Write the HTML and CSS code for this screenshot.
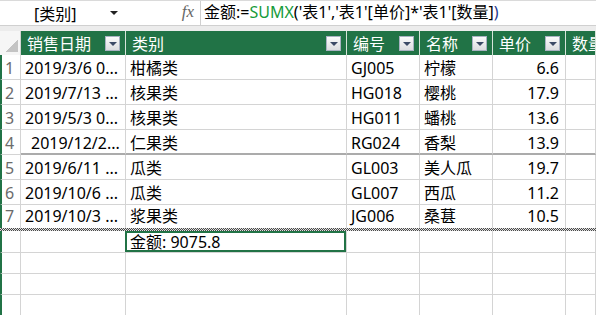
FILE: index.html
```html
<!DOCTYPE html>
<html lang="zh-CN">
<head>
    <meta charset="UTF-8">
    <title>表1</title>
    <link rel="stylesheet" href="styles.css">
</head>
<body>
    <div class="formula-bar">
        <div class="name-box">
            <span class="name">[类别]</span>
            <span class="caret"></span>
        </div>
        <div class="fx">fx</div>
        <div class="formula">金额:=<span class="fn">SUMX</span>('表1','表1'[单价]*'表1'[数量]<span class="paren">)</span></div>
    </div>
    <div class="gap"></div>

    <div class="sheet">
        <div class="row head">
            <div class="corner"></div>
            <div class="hcell"><span>销售日期</span><span class="filter"></span></div>
            <div class="hcell"><span>类别</span><span class="filter"></span></div>
            <div class="hcell"><span>编号</span><span class="filter"></span></div>
            <div class="hcell"><span>名称</span><span class="filter"></span></div>
            <div class="hcell"><span>单价</span><span class="filter"></span></div>
            <div class="hcell"><span>数量</span></div>
        </div>

        <div class="row">
            <div class="rn">1</div>
            <div class="c">2019/3/6 0...</div>
            <div class="c">柑橘类</div>
            <div class="c">GJ005</div>
            <div class="c">柠檬</div>
            <div class="c num">6.6</div>
            <div class="c"></div>
        </div>
        <div class="row">
            <div class="rn">2</div>
            <div class="c">2019/7/13 ...</div>
            <div class="c">核果类</div>
            <div class="c">HG018</div>
            <div class="c">樱桃</div>
            <div class="c num">17.9</div>
            <div class="c"></div>
        </div>
        <div class="row">
            <div class="rn">3</div>
            <div class="c">2019/5/3 0...</div>
            <div class="c">核果类</div>
            <div class="c">HG011</div>
            <div class="c">蟠桃</div>
            <div class="c num">13.6</div>
            <div class="c"></div>
        </div>
        <div class="row split">
            <div class="rn">4</div>
            <div class="c indent">2019/12/2...</div>
            <div class="c">仁果类</div>
            <div class="c">RG024</div>
            <div class="c">香梨</div>
            <div class="c num">13.9</div>
            <div class="c"></div>
        </div>
        <div class="row">
            <div class="rn">5</div>
            <div class="c">2019/6/11 ...</div>
            <div class="c">瓜类</div>
            <div class="c">GL003</div>
            <div class="c">美人瓜</div>
            <div class="c num">19.7</div>
            <div class="c"></div>
        </div>
        <div class="row">
            <div class="rn">6</div>
            <div class="c">2019/10/6 ...</div>
            <div class="c">瓜类</div>
            <div class="c">GL007</div>
            <div class="c">西瓜</div>
            <div class="c num">11.2</div>
            <div class="c"></div>
        </div>
        <div class="row last">
            <div class="rn">7</div>
            <div class="c">2019/10/3 ...</div>
            <div class="c">浆果类</div>
            <div class="c">JG006</div>
            <div class="c">桑葚</div>
            <div class="c num">10.5</div>
            <div class="c"></div>
        </div>
        <div class="table-end"></div>

        <div class="row total">
            <div class="rn"></div>
            <div class="c"></div>
            <div class="c selected">金额: 9075.8</div>
            <div class="c"></div>
            <div class="c"></div>
            <div class="c"></div>
            <div class="c"></div>
        </div>
        <div class="row empty">
            <div class="rn"></div>
            <div class="c"></div>
            <div class="c"></div>
            <div class="c"></div>
            <div class="c"></div>
            <div class="c"></div>
            <div class="c"></div>
        </div>
        <div class="row empty">
            <div class="rn"></div>
            <div class="c"></div>
            <div class="c"></div>
            <div class="c"></div>
            <div class="c"></div>
            <div class="c"></div>
            <div class="c"></div>
        </div>
        <div class="row empty">
            <div class="rn"></div>
            <div class="c"></div>
            <div class="c"></div>
            <div class="c"></div>
            <div class="c"></div>
            <div class="c"></div>
            <div class="c"></div>
        </div>
    </div>
</body>
</html>
```

FILE: styles.css
```css
body {
    margin: 0;
    overflow: hidden;
    background-color: #fff;
    color: #000;
    font-family: "Noto Sans", "Noto Sans CJK SC", sans-serif;
    font-size: 16px;
}

/* formula bar */
.formula-bar {
    display: flex;
    height: 26px;
    border-top: 1px solid #dadada;
    border-bottom: 1px solid #d0d0d0;
    box-sizing: border-box;
}

.name-box {
    width: 128px;
    display: flex;
    align-items: center;
    padding-left: 34px;
    box-sizing: border-box;
}

.name-box .name {
    flex: 1;
}

.caret {
    width: 0;
    height: 0;
    margin-right: 10px;
    border-left: 4px solid transparent;
    border-right: 4px solid transparent;
    border-top: 4px solid #222;
}

.fx {
    width: 73px;
    text-align: right;
    padding-right: 6px;
    box-sizing: border-box;
    font-family: "Liberation Serif", serif;
    font-style: italic;
    font-size: 17px;
    color: #666;
    line-height: 22px;
    border-right: 1px solid #d0d0d0;
}

.formula {
    padding-left: 3px;
    line-height: 23px;
    white-space: nowrap;
}

.formula .fn {
    color: #179b3b;
}

.formula .paren {
    color: #1f3a8f;
}

.gap {
    height: 5px;
    background-color: #ececec;
}

/* sheet grid */
.row {
    display: grid;
    grid-template-columns: 21px 105px 221px 73px 73px 73px 1fr;
    height: 25px;
}

.row > div {
    box-sizing: border-box;
    border-right: 1px solid #d4d4d4;
    border-bottom: 1px solid #d4d4d4;
    white-space: nowrap;
    overflow: hidden;
}

.head {
    height: 24px;
}

.head > div {
    border-bottom: none;
}

.corner {
    background: linear-gradient(135deg, transparent 50%, #c4c4c4 50%) right 2px bottom 3px / 12px 12px no-repeat, #f6f6f6;
}

.hcell {
    background-color: #217346;
    color: #fff;
    display: flex;
    align-items: center;
    justify-content: space-between;
    padding: 0 5px 0 6px;
    border-right-color: #d6e4da !important;
}

.filter {
    width: 15px;
    height: 15px;
    box-sizing: border-box;
    border: 1px solid #a9b2c2;
    background: linear-gradient(#fbfbfb, #dcdde0);
    display: flex;
    align-items: center;
    justify-content: center;
    flex-shrink: 0;
}

.filter::after {
    content: "";
    border-left: 4px solid transparent;
    border-right: 4px solid transparent;
    border-top: 4px solid #3c4a66;
    margin-top: 2px;
}

.rn {
    border-left: 2px solid #217346;
    color: #6b6b6b;
    padding: 2px 0 0 3px;
    line-height: 23px;
}

.c {
    padding: 2px 4px 0 4px;
    line-height: 23px;
}

.c.indent {
    padding-left: 10px;
}

.c.num {
    text-align: right;
    padding-right: 6px;
}

.split > .c {
    border-bottom: 2px solid #ababab;
}

.last {
    height: 23px;
}

.last > div {
    border-bottom: none;
    padding-top: 0;
}

.table-end {
    height: 3px;
    background: repeating-conic-gradient(#4a4a4a 0 25%, #e0e0e0 0 50%) 0 0 / 2px 2px;
}

.total {
    height: 22px;
}

.total .c {
    padding-top: 0;
    line-height: 22px;
}

.total .c.selected {
    box-shadow: inset 0 0 0 2px #217346;
    margin-left: -1px;
    padding-left: 5px;
    line-height: 23px;
}

.empty {
    height: 21px;
}
```
